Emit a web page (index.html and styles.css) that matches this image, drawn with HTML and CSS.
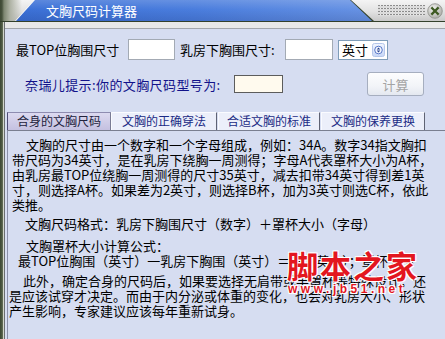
FILE: index.html
```html
<!DOCTYPE html>
<html lang="zh-CN">
<head>
<meta charset="utf-8">
<title>文胸尺码计算器</title>
<link rel="stylesheet" href="styles.css">
</head>
<body>
<div class="app">
  <div class="titlebar">
    <div class="tb-edge"><div class="tb-blue">文胸尺码计算器</div></div>
    <div class="tb-grip"></div>
    <div class="tb-close">
      <svg width="16" height="16" viewBox="0 0 16 16">
        <defs>
          <radialGradient id="cg" cx="40%" cy="35%" r="70%">
            <stop offset="0" stop-color="#f4f4f2"/>
            <stop offset="1" stop-color="#a9aaa4"/>
          </radialGradient>
        </defs>
        <circle cx="8" cy="8" r="7.3" fill="url(#cg)" stroke="#8e8f8a" stroke-width="0.8"/>
        <path d="M5.2 5.2 L10.8 10.8 M10.8 5.2 L5.2 10.8" stroke="#3d5a22" stroke-width="2.3" stroke-linecap="square"/>
      </svg>
    </div>
  </div>
  <div class="body">
    <div class="frame-left"></div>
    <div class="main">
      <div class="band"></div>
      <div class="form">
        <div class="row row1">
          <span class="lbl lbl-top">最TOP位胸围尺寸</span>
          <input class="field f1" type="text">
          <span class="lbl lbl-under">乳房下胸围尺寸:</span>
          <input class="field f2" type="text">
          <div class="unit">
            <span class="unit-text">英寸</span>
            <span class="spin">
              <svg width="13" height="14" viewBox="0 0 13 14">
                <defs>
                  <linearGradient id="sg" x1="0" y1="0" x2="0" y2="1">
                    <stop offset="0" stop-color="#f2f6fe"/>
                    <stop offset="1" stop-color="#c6d6f6"/>
                  </linearGradient>
                </defs>
                <rect x="0.5" y="0.5" width="12" height="13" rx="2" fill="url(#sg)" stroke="#b4c6ea"/>
                <circle cx="6.5" cy="7" r="3.8" fill="#f8faff" stroke="#5576c8" stroke-width="1"/>
                <path d="M6.5 4.6 L8.3 6.4 L4.7 6.4 Z M6.5 9.4 L8.3 7.6 L4.7 7.6 Z" fill="#23408e"/>
              </svg>
            </span>
          </div>
        </div>
        <div class="row row2">
          <span class="hint">奈瑞儿提示:你的文胸尺码型号为:</span>
          <input class="field result" type="text">
          <button class="calc" type="button" disabled>计算</button>
        </div>
      </div>
      <div class="tabs">
        <div class="tab active w104">合身的文胸尺码</div>
        <div class="tab w106">文胸的正确穿法</div>
        <div class="tab w102 gap">合适文胸的标准</div>
        <div class="tab w104 gap">文胸的保养更换</div>
      </div>
      <div class="panel">
        <div class="para">
          <div class="ln i26">文胸的尺寸由一个数字和一个字母组成，例如：34A。数字34指文胸扣</div>
          <div class="ln">带尺码为34英寸，是在乳房下绕胸一周测得；字母A代表罩杯大小为A杯，</div>
          <div class="ln">由乳房最TOP位绕胸一周测得的尺寸35英寸，减去扣带34英寸得到差1英</div>
          <div class="ln">寸，则选择A杯。如果差为2英寸，则选择B杯，加为3英寸则选C杯，依此</div>
          <div class="ln">类推。</div>
        </div>
        <div class="para p2">
          <div class="ln i25">文胸尺码格式：乳房下胸围尺寸（数字）＋罩杯大小（字母）</div>
        </div>
        <div class="para p3">
          <div class="ln i26">文胸罩杯大小计算公式：</div>
          <div class="ln i18">最TOP位胸围（英寸）一乳房下胸围（英寸）＝差（英寸）；罩杯大小</div>
        </div>
        <div class="para p4">
          <div class="ln i23">此外，确定合身的尺码后，如果要选择无肩带或半罩杯等特殊设计，还</div>
          <div class="ln i9">是应该试穿才决定。而由于内分泌或体重的变化，也会对乳房大小、形状</div>
          <div class="ln i9">产生影响，专家建议应该每年重新试身。</div>
        </div>
        <div class="wm">
          <div class="wm-big">脚本之家</div>
          <div class="wm-url">www.jb51.net</div>
        </div>
      </div>
    </div>
  </div>
</div>
</body>
</html>
```

FILE: styles.css
```css
* {
  box-sizing: border-box;
  margin: 0;
  padding: 0;
}

html, body {
  width: 445px;
  height: 339px;
  overflow: hidden;
}

body {
  font-family: "Noto Sans CJK SC", "Noto Sans", sans-serif;
  font-size: 13px;
  color: #000;
  background: #d6ddf1;
}

.app {
  display: flex;
  flex-direction: column;
  width: 445px;
  height: 339px;
}

/* ---------- title bar ---------- */
.titlebar {
  flex: none;
  display: flex;
  align-items: center;
  height: 22px;
  border-bottom: 1px solid #33402b;
  background:
    linear-gradient(90deg, #3d4834 0, #47523d 2px, #7d8671 4px, #aeb2a4 10px, rgba(214, 214, 214, 0) 22px),
    linear-gradient(180deg, #f4f4f4 0, #e2e2e2 55%, #c8c8c8 100%);
}

.tb-edge {
  flex: none;
  align-self: stretch;
  display: flex;
  margin-left: 15px;
  width: 359px;
  clip-path: polygon(19px 0, 336px 0, 359px 100%, 0 100%);
  background: linear-gradient(90deg, #fbfbfb 0 40px, #34422c 40px);
}

.tb-blue {
  margin-left: 1px;
  width: 356px;
  clip-path: polygon(19px 0, 334px 0, 356px 100%, 0 100%);
  background:
    linear-gradient(180deg, rgba(255, 255, 255, 0.16) 0, rgba(255, 255, 255, 0) 45%, rgba(0, 10, 60, 0.12) 100%),
    linear-gradient(90deg, #3b70d6 0, #4a7ddd 50%, #6893e4 100%);
  color: #fff;
  font-size: 13px;
  line-height: 21px;
  padding-left: 30px;
  white-space: nowrap;
}

.tb-grip {
  flex: none;
  margin-left: 4px;
  width: 47px;
  height: 11px;
  background:
    repeating-linear-gradient(180deg, transparent 0 1px, #dcdcdc 1px 3px),
    repeating-linear-gradient(90deg, #8c8c8c 0 2px, #ececec 2px 3px);
}

.tb-close {
  flex: none;
  margin-left: 2px;
  width: 16px;
  height: 16px;
  display: flex;
}

/* ---------- body ---------- */
.body {
  flex: 1;
  display: flex;
  min-height: 0;
}

.frame-left {
  flex: none;
  width: 5px;
  background: linear-gradient(90deg, #3c4733 0, #4f5b44 2px, #6b755f 3px, #d2d5ca 3px, #d2d5ca 4px, #6a6e70 4px);
}

.main {
  flex: 1;
  display: flex;
  flex-direction: column;
  background: #d6ddf1;
  min-width: 0;
}

.band {
  flex: none;
  height: 7px;
  background: #e8e8e8;
  border-bottom: 1px solid #a2a6ac;
}

/* ---------- form ---------- */
.form {
  flex: none;
  padding-top: 10px;
}

.row {
  display: flex;
  align-items: center;
  white-space: nowrap;
}

.row1 {
  height: 21px;
  padding-left: 11px;
}

.lbl-top {
  width: 112px;
}

.lbl-under {
  margin-left: 5px;
  width: 105px;
}

.field {
  border: 1px solid #a3aab4;
  background: #fff;
  font: inherit;
  outline: none;
}

.f1 {
  width: 47px;
  height: 21px;
}

.f2 {
  width: 48px;
  height: 21px;
}

.unit {
  margin-left: 5px;
  width: 50px;
  height: 20px;
  display: flex;
  align-items: center;
  justify-content: space-between;
  border: 1px solid #7f9db9;
  background: #fff;
  padding: 0 2px 0 3px;
}

.spin {
  display: flex;
}

.row2 {
  margin-top: 12px;
  height: 24px;
  padding-left: 20px;
}

.hint {
  width: 209px;
  color: #12128a;
  letter-spacing: 0.4px;
}

.result {
  width: 49px;
  height: 18px;
  background: #fffaee;
  border: 1px solid #5c5c5c;
}

.calc {
  margin-left: 84px;
  width: 57px;
  height: 24px;
  border: 1px solid #a6aebf;
  border-radius: 3px;
  background: linear-gradient(180deg, #fdfdfe 0, #f2f4f8 60%, #e4e8f0 100%);
  color: #a4a4a4;
  font: inherit;
  font-size: 13px;
}

/* ---------- tabs ---------- */
.tabs {
  flex: none;
  display: flex;
  margin-top: 16px;
  height: 18px;
  padding-left: 2px;
}

.tab {
  font-size: 12px;
  line-height: 16px;
  text-align: center;
  white-space: nowrap;
  color: #1b2b85;
  background: #eceffa;
  border: 1px solid;
  border-bottom: none;
  border-color: #fafbff #5f6374 #5f6374 #fafbff;
}

.tab.active {
  background: linear-gradient(180deg, #dcdaf0 0, #c4c0e0 100%);
  color: #22223c;
  border-color: #8e8cb0 #7a7c94 #7a7c94 #4e4c74;
}

.w104 { width: 104px; }
.w106 { width: 106px; }
.w102 { width: 102px; }
.gap { margin-left: 1px; }

/* ---------- panel ---------- */
.panel {
  flex: 1;
  position: relative;
  margin-left: 2px;
  border-left: 1px solid #8a90a8;
  border-top: 1px solid #7a7f90;
  padding-top: 6px;
}

.ln {
  height: 15px;
  line-height: 15px;
  white-space: nowrap;
  padding-left: 4px;
}

.i26 { padding-left: 18px; }
.i25 { padding-left: 17px; }
.i23 { padding-left: 15px; }
.i18 { padding-left: 10px; }
.i9 { padding-left: 1px; }

.p2 { margin-top: 4px; }
.p3 { margin-top: 7px; }
.p4 { margin-top: 5px; }

/* watermark overlay */
.wm {
  position: absolute;
  left: 279px;
  top: 116px;
  color: #e3161f;
}

.wm-big {
  font-size: 31px;
  font-weight: 700;
  line-height: 36px;
  letter-spacing: 2px;
  text-shadow: 1px 1px 0 #fff, -1px -1px 0 #fff, 1px -1px 0 #fff, -1px 1px 0 #fff;
}

.wm-url {
  font-family: "Liberation Sans", sans-serif;
  font-weight: 700;
  font-size: 12px;
  line-height: 12px;
  letter-spacing: 3.5px;
  margin-left: 1px;
  text-shadow: 1px 1px 0 #fff, -1px -1px 0 #fff, 1px -1px 0 #fff, -1px 1px 0 #fff;
}
```
